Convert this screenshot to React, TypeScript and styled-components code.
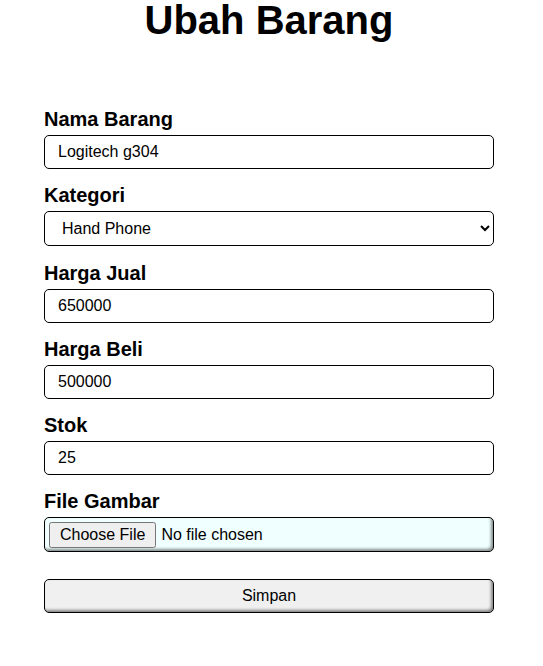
import React from "react";
import styled, { createGlobalStyle } from "styled-components";

const Global = createGlobalStyle`
  html, body { margin: 0; padding: 0; background: #fff; }
  body { font-family: "Liberation Sans", Arial, sans-serif; color: #000; }
`;

const Page = styled.div`
  width: 538px;
  display: flex;
  flex-direction: column;
  align-items: center;
`;

const Title = styled.h1`
  margin: 0;
  font-size: 40px;
  line-height: 40px;
  font-weight: bold;
  text-align: center;
`;

const Form = styled.form`
  width: 450px;
  margin-top: 68px;
  display: flex;
  flex-direction: column;
`;

const Label = styled.label`
  display: block;
  font-size: 20px;
  line-height: 23px;
  font-weight: bold;
  margin: 0 0 4px;
`;

const Field = styled.div`
  display: flex;
  flex-direction: column;
  margin-bottom: 15.3px;
`;

const TextInput = styled.input`
  box-sizing: border-box;
  width: 100%;
  height: 34px;
  padding: 7px 13px;
  border: 1px solid #000;
  border-radius: 5px;
  font-family: "Liberation Sans", Arial, sans-serif;
  font-size: 16px;
  color: #000;
  background: #fff;
  outline: none;
`;

const Select = styled.select`
  box-sizing: border-box;
  width: 100%;
  height: 35px;
  padding: 0 13px;
  border: 1px solid #000;
  border-radius: 5px;
  font-family: "Liberation Sans", Arial, sans-serif;
  font-size: 16px;
  color: #000;
  background: #fff;
`;

const FileInput = styled.input`
  box-sizing: border-box;
  width: 100%;
  height: 35px;
  padding: 4px 4px;
  border: 1px solid #000;
  border-radius: 5px;
  font-family: "Liberation Sans", Arial, sans-serif;
  font-size: 16px;
  background: #f0ffff;
  box-shadow: inset -2px -2px 3px rgba(0, 0, 0, 0.45);
  &::file-selector-button {
    font-family: "Liberation Sans", Arial, sans-serif;
    font-size: 16px;
    height: 26px;
    padding: 1px 9px;
    margin-right: 5px;
  }
`;

const Submit = styled.button`
  box-sizing: border-box;
  width: 100%;
  height: 34px;
  margin-top: 11px;
  border: 1px solid #000;
  border-radius: 5px;
  font-family: "Liberation Sans", Arial, sans-serif;
  font-size: 16px;
  color: #000;
  background: #f0f0f0;
  box-shadow: inset -2px -2px 3px rgba(0, 0, 0, 0.45);
`;

export default function App() {
  return (
    <>
      <Global />
      <Page>
        <Title>Ubah Barang</Title>
        <Form onSubmit={(e) => e.preventDefault()}>
          <Field>
            <Label htmlFor="nama">Nama Barang</Label>
            <TextInput id="nama" type="text" defaultValue="Logitech g304" />
          </Field>
          <Field>
            <Label htmlFor="kategori">Kategori</Label>
            <Select id="kategori" defaultValue="hp">
              <option value="hp">Hand Phone</option>
              <option value="aks">Aksesoris</option>
            </Select>
          </Field>
          <Field>
            <Label htmlFor="jual">Harga Jual</Label>
            <TextInput id="jual" type="text" defaultValue="650000" />
          </Field>
          <Field>
            <Label htmlFor="beli">Harga Beli</Label>
            <TextInput id="beli" type="text" defaultValue="500000" />
          </Field>
          <Field>
            <Label htmlFor="stok">Stok</Label>
            <TextInput id="stok" type="text" defaultValue="25" />
          </Field>
          <Field>
            <Label htmlFor="gambar">File Gambar</Label>
            <FileInput id="gambar" type="file" />
          </Field>
          <Submit type="submit">Simpan</Submit>
        </Form>
      </Page>
    </>
  );
}
